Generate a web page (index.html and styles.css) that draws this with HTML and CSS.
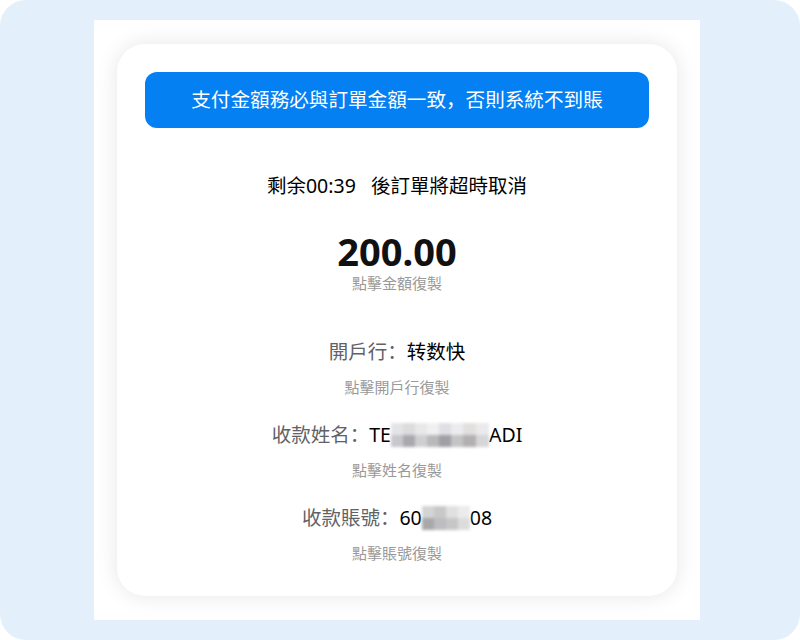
FILE: index.html
```html
<!DOCTYPE html>
<html lang="zh-CN">
<head>
    <meta charset="UTF-8">
    <meta name="viewport" content="width=device-width, initial-scale=1.0">
    <title>支付</title>
    <link rel="stylesheet" href="styles.css">
</head>
<body>
    <div class="screen">
        <div class="panel">
            <section class="card">
                <!-- warning banner -->
                <div class="notice">支付金額務必與訂單金額一致，否則系統不到賬</div>

                <p class="timer">剩余00:39&nbsp;&nbsp;&nbsp;後訂單將超時取消</p>

                <div class="amount">
                    <div class="amount-value">200.00</div>
                    <div class="hint">點擊金額復製</div>
                </div>

                <!-- payee details -->
                <div class="field">
                    <div class="field-row"><span class="label">開戶行：</span><span class="value">转数快</span></div>
                    <div class="hint">點擊開戶行復製</div>
                </div>
                <div class="field">
                    <div class="field-row"><span class="label">收款姓名：</span><span class="value">TE<span class="masked masked-name"></span>ADI</span></div>
                    <div class="hint">點擊姓名復製</div>
                </div>
                <div class="field">
                    <div class="field-row"><span class="label">收款賬號：</span><span class="value">60<span class="masked masked-acct"></span>08</span></div>
                    <div class="hint">點擊賬號復製</div>
                </div>
            </section>
        </div>
    </div>
</body>
</html>
```

FILE: styles.css
```css
* {
    margin: 0;
    box-sizing: border-box;
    font-family: "Noto Sans", "Noto Sans CJK SC", sans-serif;
}

body {
    margin: 0;
    background-color: #fff;
}

.screen {
    width: 800px;
    height: 640px;
    background-color: #e3f0fc;
    border-radius: 26px;
    padding: 20px 100px 20px 94px;
}

.panel {
    width: 606px;
    height: 600px;
    background-color: #fff;
    padding: 24px 23px;
}

.card {
    width: 560px;
    height: 552px;
    background-color: #fff;
    border-radius: 28px;
    box-shadow: 0 0 22px rgba(0, 0, 0, 0.1);
    padding: 28px 28px 0;
    text-align: center;
}

.notice {
    height: 56px;
    line-height: 56px;
    background-color: #0580f2;
    color: #fff;
    font-size: 19.6px;
    border-radius: 12px;
}

.timer {
    margin-top: 44px;
    font-size: 19.5px;
    line-height: 28px;
    color: #000;
}

.amount {
    margin-top: 33px;
}

.amount-value {
    font-size: 38px;
    font-weight: 700;
    line-height: 36px;
    color: #111;
}

.hint {
    font-size: 15px;
    line-height: 20px;
    color: #999;
}

.amount .hint {
    margin-top: 4px;
}

.field {
    margin-top: 46px;
}

.field + .field {
    margin-top: 25px;
}

.field-row {
    font-size: 19.5px;
    line-height: 26px;
    margin-bottom: 12px;
}

.label {
    color: #606266;
}

.value {
    color: #000;
}

.masked {
    display: inline-block;
    height: 24px;
    vertical-align: -5px;
    filter: blur(1.5px);
}

.masked-name {
    width: 98px;
    background:
        linear-gradient(90deg, #e4e4e6 0 12px, #dcdcdc 12px 24px, #e8e8e8 24px 36px, #f0f0f0 36px 48px, #e0e0e4 48px 60px, #ececee 60px 72px, #e2e0de 72px 85px, #eaeaec 85px) top / 100% 12px no-repeat,
        linear-gradient(90deg, #c8c8cc 0 12px, #a9a9ad 12px 24px, #cfcfd1 24px 36px, #b9b9bb 36px 48px, #a0a0a4 48px 60px, #c4c4c6 60px 72px, #b2b0b0 72px 85px, #d6d6d8 85px) bottom / 100% 12px no-repeat;
}

.masked-acct {
    width: 48px;
    background:
        linear-gradient(90deg, #d4d4d6 0 12px, #c8c8c8 12px 24px, #e0e0e0 24px 36px, #ececec 36px) top / 100% 12px no-repeat,
        linear-gradient(90deg, #a8a8aa 0 12px, #bdbdbf 12px 24px, #c6c6c8 24px 36px, #dcdcdc 36px) bottom / 100% 12px no-repeat;
}
```
